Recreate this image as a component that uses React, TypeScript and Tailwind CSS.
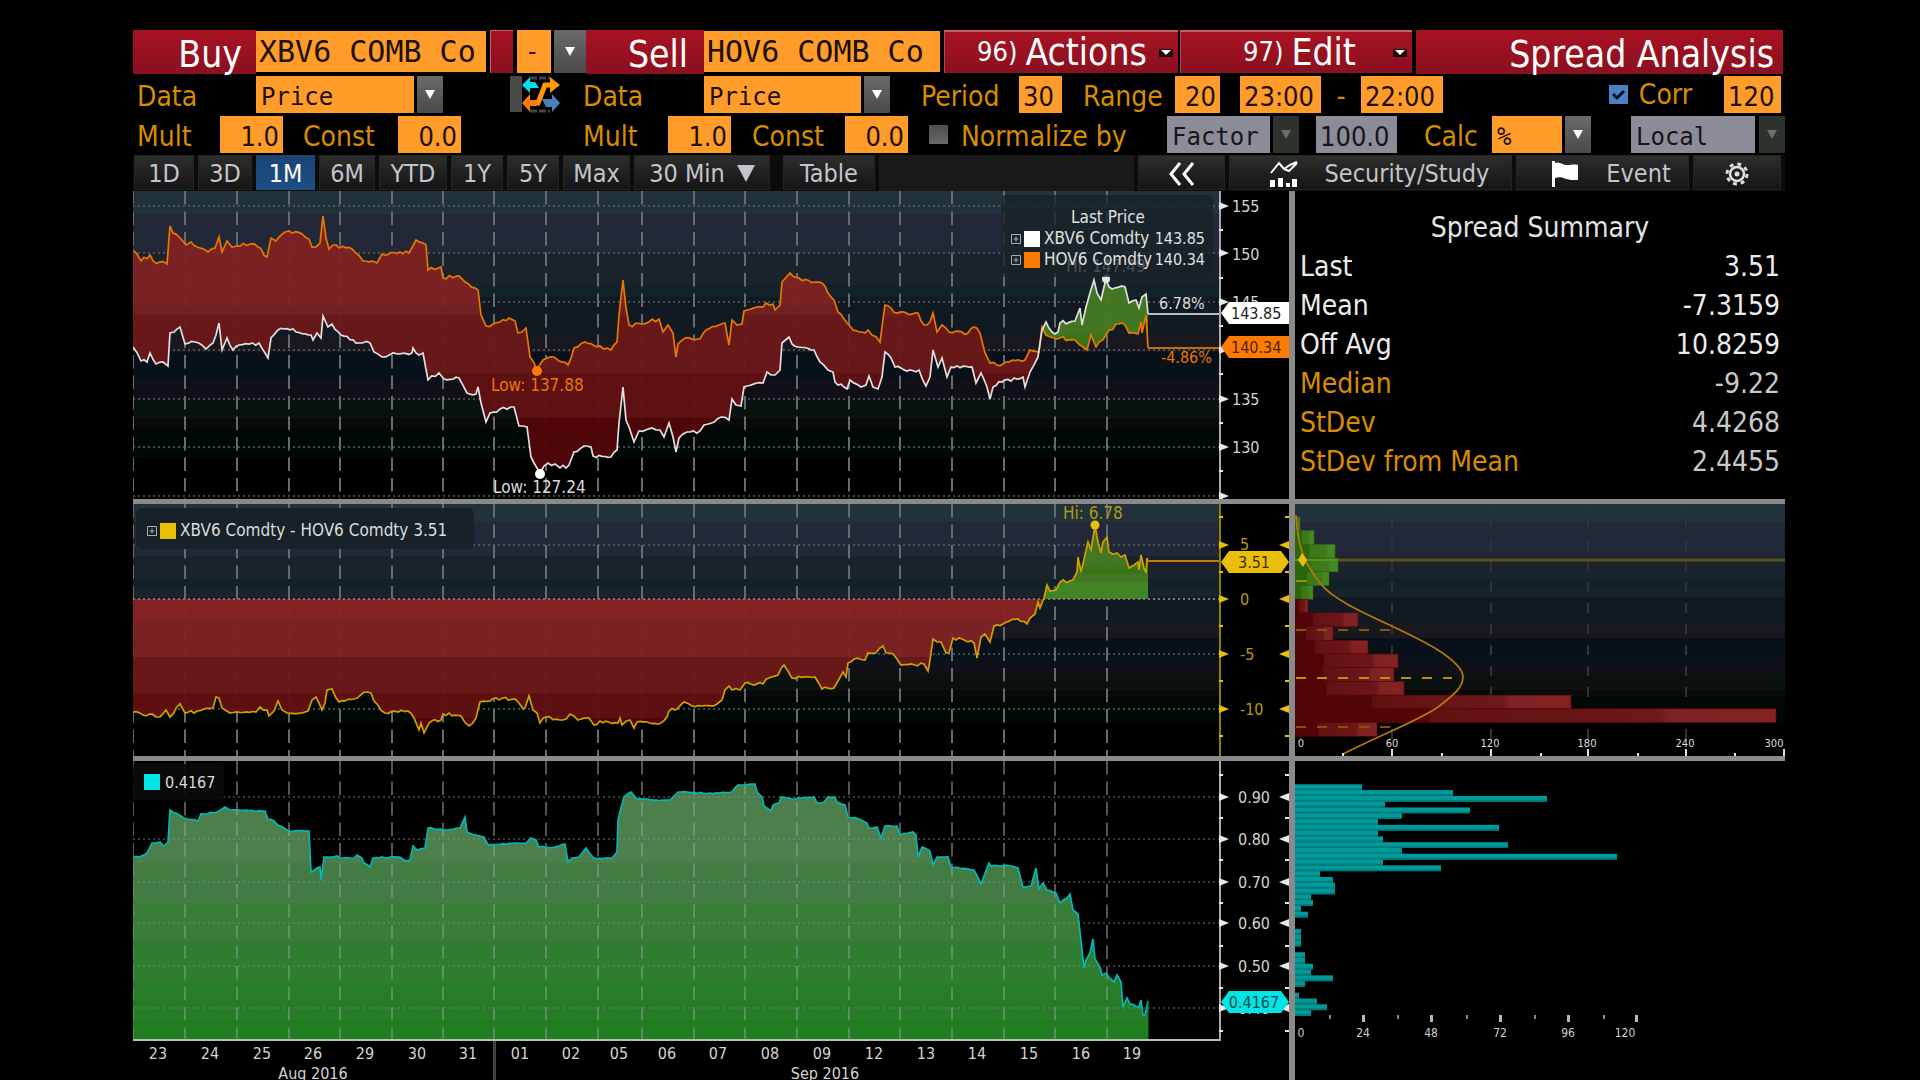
import type { ReactNode } from 'react';
import clsx from 'clsx';

type Point = [number, number];
type Band = [number, string];

const HO_PATH =
  '133,250 141,261 150,255 153,261 167,264 170,226 173,233 182,240 186,245 191,242 208,252 215,248 219,237 222,252 227,241 232,247 237,246 250,244 258,247 267,257 271,238 276,241 285,232 289,231 302,234 309,239 312,247 320,243 323,216 326,238 329,249 333,245 352,249 363,261 372,261 377,263 382,254 409,253 413,246 416,240 426,245 428,270 441,267 443,278 459,276 465,282 478,290 481,315 486,326 500,322 509,318 515,321 518,333 526,328 530,357 537,370 543,360 554,357 559,361 568,365 574,348 585,342 600,346 611,350 617,342 619,315 623,280 626,308 629,325 642,324 659,319 663,332 668,325 673,333 676,357 678,344 685,338 700,339 706,330 719,325 725,323 729,345 732,320 737,325 742,324 744,311 763,307 766,303 773,304 775,310 780,305 782,282 790,273 799,278 815,282 822,283 828,293 834,300 838,312 847,323 853,330 865,333 868,330 872,335 880,342 882,327 885,305 891,308 897,313 918,313 924,325 930,322 933,313 937,332 942,325 949,332 968,333 974,327 980,333 985,353 990,363 997,365 1006,362 1025,360 1030,350 1039,352 1042,327 1046,335 1060,338 1075,340 1083,347 1087,350 1091,335 1096,347 1106,335 1116,324 1125,325 1129,333 1138,334 1141,322 1142,333 1146,315 1148,348';

const XB_PATH =
  '133,347 141,361 147,362 150,353 156,364 163,362 168,366 170,333 174,332 180,327 185,344 195,342 206,349 213,343 219,323 222,350 227,338 233,350 239,345 259,343 268,358 271,338 278,330 293,329 311,335 313,340 317,333 321,338 323,316 328,327 332,324 341,335 359,343 370,343 374,352 382,357 393,353 412,353 413,348 419,355 423,353 428,380 439,373 444,379 459,378 467,393 476,394 478,387 481,403 486,422 490,413 500,409 514,407 519,426 527,427 531,457 540,473 548,463 555,464 560,468 569,465 574,452 587,446 591,447 593,456 611,457 617,450 619,423 623,387 626,420 629,427 634,442 639,431 652,428 660,430 664,437 669,423 673,437 676,452 679,438 687,432 700,431 704,425 721,417 729,420 732,399 736,405 741,406 744,387 763,383 767,372 775,375 780,370 782,343 789,337 792,344 798,347 814,350 820,362 828,370 833,372 835,382 847,389 850,380 861,387 866,385 869,376 873,387 878,389 882,377 885,352 891,358 895,367 907,371 919,370 926,386 930,377 933,350 938,367 942,358 947,377 951,367 972,367 976,383 981,373 987,387 990,399 993,387 1002,382 1023,377 1025,387 1030,372 1038,357 1042,330 1046,322 1052,332 1058,332 1060,323 1075,321 1080,308 1082,325 1086,307 1090,293 1094,280 1097,293 1101,300 1104,287 1106,279 1109,287 1125,287 1129,303 1136,300 1139,308 1142,297 1146,294 1148,314';

const SPREAD_PATH =
  '133,712 143,715 152,714 160,717 166,710 170,717 180,704 185,713 197,711 213,708 216,697 219,698 222,708 230,713 256,712 260,707 267,710 269,716 274,711 278,701 282,710 287,713 308,711 312,700 316,697 319,703 322,710 325,703 327,690 332,689 339,702 354,699 367,692 371,693 374,701 385,713 408,711 414,718 419,730 421,723 424,733 429,723 441,720 443,714 461,716 469,726 476,718 480,702 496,698 515,699 523,709 525,708 529,696 533,710 537,713 540,723 546,717 563,720 570,714 578,720 589,718 594,725 600,721 618,723 620,718 622,725 630,720 634,728 637,722 661,723 667,717 669,711 678,708 684,702 692,706 717,704 722,700 725,690 729,686 732,690 740,690 745,683 763,684 769,678 778,675 784,665 792,678 815,677 822,689 834,688 838,681 843,672 846,677 848,663 854,659 865,660 868,653 876,653 883,646 886,653 893,654 897,659 901,665 924,664 928,671 930,660 933,639 937,642 941,642 946,653 949,653 953,638 962,639 974,643 977,658 981,637 985,634 990,642 994,626 1006,622 1018,619 1027,624 1030,618 1035,614 1038,602 1040,608 1044,598 1047,585 1050,591 1056,590 1060,582 1073,580 1077,572 1078,557 1081,572 1085,555 1088,542 1091,550 1095,526 1098,542 1101,553 1103,542 1107,537 1109,552 1117,553 1121,557 1125,555 1129,568 1134,565 1138,562 1139,570 1141,555 1144,568 1146,573 1147,558 1148,561';

const CORR_PATH =
  '133,857 139,857 147,853 152,843 160,842 164,846 168,842 170,810 184,818 198,821 201,814 217,812 225,807 230,810 265,811 268,819 274,821 278,825 289,831 309,831 311,872 320,867 321,880 324,857 337,856 341,858 354,858 357,855 362,858 364,863 370,867 373,858 400,857 406,861 410,860 413,846 417,850 425,848 428,828 444,830 460,828 465,817 467,832 476,835 484,837 488,845 518,843 526,843 531,838 536,840 539,847 555,847 565,844 568,862 572,858 579,857 586,848 594,858 612,858 617,852 618,820 624,797 631,792 637,799 663,800 670,800 678,792 710,793 732,792 738,785 755,784 757,792 762,797 764,806 771,811 773,805 779,803 781,797 792,799 814,797 817,803 824,802 828,797 835,797 837,802 845,805 848,817 859,819 867,823 869,828 877,827 881,838 885,826 897,826 900,835 908,833 913,832 916,835 918,857 922,847 930,851 933,865 937,857 948,857 951,867 974,870 981,884 989,863 991,866 1006,865 1018,868 1023,887 1031,886 1036,868 1039,889 1043,883 1047,890 1056,893 1060,903 1067,898 1070,894 1073,910 1078,914 1084,968 1086,960 1090,953 1093,939 1095,959 1100,967 1102,975 1106,973 1109,977 1114,982 1117,975 1121,982 1123,1007 1127,998 1130,1004 1139,1007 1141,1000 1143,1015 1145,1015 1148,1001';

const DAY_LINES = [133, 185, 237, 289, 340, 392, 443, 494, 546, 598, 642, 694, 745, 797, 849, 900, 952, 1004, 1055, 1107];
const DAYS: [string, number][] = [
  ['23', 158], ['24', 210], ['25', 262], ['26', 313], ['29', 365], ['30', 417], ['31', 468],
  ['01', 520], ['02', 571], ['05', 619], ['06', 667], ['07', 718], ['08', 770], ['09', 822],
  ['12', 874], ['13', 926], ['14', 977], ['15', 1029], ['16', 1081], ['19', 1132],
];

const PRICE_BANDS: Band[] = [
  [191, '#22323a'], [214, '#232838'], [253, '#1a222b'], [285, '#122229'], [297, '#111923'], [336, '#19181f'],
  [352, '#08101a'], [380, '#111018'], [399, '#0a1210'], [418, '#0a0a0a'], [428, '#000806'], [458, '#000000'],
];
const SPREAD_BANDS: Band[] = [
  [504, '#22323a'], [522, '#232838'], [556, '#1a222b'], [579, '#122229'], [590, '#1a222b'], [597, '#111923'], [623, '#19181f'],
  [638, '#08101a'], [662, '#111018'], [675, '#0a1210'], [690, '#0a0a0a'], [697, '#000806'], [723, '#000000'],
];

const SPREAD_HIST = [5, 19, 40, 43, 34, 18, 13, 63, 38, 73, 103, 99, 109, 276, 481, 82];
const CORR_HIST = [
  67, 158, 252, 90, 175, 107, 83, 204, 83, 88, 213, 107, 322, 88, 146, 25, 38, 40, 40, 16,
  18, 6, 13, 0, 0, 6, 6, 6, 0, 10, 10, 18, 16, 38, 10, 0, 4, 22, 32, 16,
];

const SUMMARY = [
  { label: 'Last', value: '3.51', main: true },
  { label: 'Mean', value: '-7.3159', main: true },
  { label: 'Off Avg', value: '10.8259', main: true },
  { label: 'Median', value: '-9.22' },
  { label: 'StDev', value: '4.4268' },
  { label: 'StDev from Mean', value: '2.4455' },
];

const parse = (path: string) => path.split(' ').map((p) => p.split(',').map(Number) as Point);

// fills the gaps between sampled points with small ticks
function roughen(points: Point[], amp: number): Point[] {
  const out: Point[] = [];
  points.forEach(([x, y], i) => {
    out.push([x, y]);
    const next = points[i + 1];
    if (!next) return;
    const steps = Math.floor((next[0] - x) / 3);
    for (let s = 1; s < steps; s++) {
      const t = s / steps;
      const n = Math.sin((x + s * 3) * 12.9898) * 43758.5453;
      out.push([x + (next[0] - x) * t, y + (next[1] - y) * t + (n - Math.floor(n) - 0.5) * 2 * amp]);
    }
  });
  return out;
}

const toStr = (points: Point[]) => points.map((p) => `${p[0]},${p[1].toFixed(1)}`).join(' ');

const ho = roughen(parse(HO_PATH), 2);
const xb = roughen(parse(XB_PATH), 2);
const spread = roughen(parse(SPREAD_PATH), 1.8);
const corr = roughen(parse(CORR_PATH), 0.8);
const between = toStr([...ho, ...[...xb].reverse()]);

function BandGradient({ id, bands, end }: { id: string; bands: Band[]; end: number }) {
  const start = bands[0][0];
  return (
    <linearGradient id={id} gradientUnits="userSpaceOnUse" x1="0" x2="0" y1={start} y2={end}>
      {bands.map(([y, color], i) => {
        const to = bands[i + 1] ? bands[i + 1][0] : end;
        return [
          <stop key={`${y}a`} offset={(y - start) / (end - start)} stopColor={color} />,
          <stop key={`${y}b`} offset={(to - start) / (end - start)} stopColor={color} />,
        ];
      })}
    </linearGradient>
  );
}

function Grid({ rows, top, bottom, opacity = 1 }: { rows: number[]; top: number; bottom: number; opacity?: number }) {
  return (
    <g opacity={opacity} fill="none">
      {rows.map((y) => (
        <line key={y} x1="133" x2="1219" y1={y} y2={y} stroke="#5a6264" strokeWidth="1.5" strokeDasharray="2 3" />
      ))}
      {DAY_LINES.map((x) => (
        <line key={x} x1={x} x2={x} y1={top} y2={bottom} stroke="#666c6e" strokeWidth="2" strokeDasharray="13.5 7" />
      ))}
    </g>
  );
}

function Ticks({ rows, minor, color, both }: { rows: number[]; minor: number[]; color: string; both?: boolean }) {
  return (
    <g fill={color} stroke="none">
      {rows.map((y) => (
        <g key={y}>
          <path d={`M1219 ${y - 4} L1229 ${y} L1219 ${y + 4} Z`} />
          {both && <path d={`M1289 ${y - 4} L1279 ${y} L1289 ${y + 4} Z`} />}
        </g>
      ))}
      {minor.map((y) => (
        <g key={y}>
          <rect x="1219" y={y - 1} width="4" height="2" />
          {both && <rect x="1285" y={y - 1} width="4" height="2" />}
        </g>
      ))}
    </g>
  );
}

function PriceChart() {
  return (
    <svg viewBox="133 191 1156 308" className="block h-auto w-full text-[16px]">
      <defs>
        <BandGradient id="priceBg" bands={PRICE_BANDS} end={499} />
        <BandGradient
          id="priceRed"
          bands={[[191, '#7e2123'], [305, '#752021'], [315, '#6b1819'], [373, '#611012'], [418, '#520608']]}
          end={499}
        />
        <BandGradient id="priceGreen" bands={[[270, '#447a22'], [335, '#3a7714']]} end={360} />
        <clipPath id="before"><rect x="133" y="191" width="910" height="308" /></clipPath>
        <clipPath id="after"><rect x="1043" y="191" width="106" height="308" /></clipPath>
      </defs>
      <rect x="133" y="191" width="1087" height="308" fill="url(#priceBg)" />
      <Grid rows={[206, 253, 302, 350, 399, 447, 496]} top={191} bottom={499} />
      <polygon points={between} fill="url(#priceRed)" fillOpacity="0.96" clipPath="url(#before)" />
      <polygon points={between} fill="url(#priceGreen)" fillOpacity="0.96" clipPath="url(#after)" />
      <polyline points={toStr(ho)} fill="none" stroke="#e87800" strokeWidth="1.7" />
      <polyline points={toStr(xb)} fill="none" stroke="#e2dede" strokeWidth="1.7" />
      <path d="M1148 348H1219" stroke="#c56a08" strokeWidth="2" />
      <path d="M1148 314H1219" stroke="#b9bcc0" strokeWidth="2" />
      <circle cx="537" cy="371" r="5" fill="#ff7a00" />
      <circle cx="540" cy="474" r="5" fill="#fff" />
      <circle cx="1106" cy="279" r="4" fill="#e8e8e8" />
      <g className="text-[17px]">
        <text x="491" y="391" fill="#e87800">Low: 137.88</text>
        <text x="493" y="493" fill="#dcdcdc">Low: 127.24</text>
        <text x="1106" y="272" fill="#dcdcdc" textAnchor="middle">Hi: 147.49</text>
      </g>
      <text x="1159" y="309" fill="#dcdcdc">6.78%</text>
      <text x="1161" y="363" fill="#e87800">-4.86%</text>
      <rect x="1219" y="191" width="2" height="308" fill="#a9a9a9" />
      <Ticks rows={[206, 253, 302, 350, 399, 447, 496]} minor={[230, 278, 326, 374, 423, 471]} color="#e8e8e8" />
      <g fill="#d4d4d4">
        <text x="1232" y="212">155</text>
        <text x="1232" y="260">150</text>
        <text x="1232" y="308">145</text>
        <text x="1232" y="405">135</text>
        <text x="1232" y="453">130</text>
      </g>
      <path d="M1221 313 L1229 302 H1289 V324 H1229 Z" fill="#fff" />
      <path d="M1221 347 L1229 336 H1289 V358 H1229 Z" fill="#ff7a00" />
      <text x="1231" y="319" fill="#222">143.85</text>
      <text x="1231" y="353" fill="#4a2400">140.34</text>
    </svg>
  );
}

function SpreadChart() {
  const area = toStr([[133, 599], ...spread, [1148, 599]]);
  return (
    <svg viewBox="133 504 1156 252" className="block h-auto w-full text-[16px]">
      <defs>
        <BandGradient id="spreadBg" bands={SPREAD_BANDS} end={756} />
        <BandGradient
          id="spreadRed"
          bands={[[599, '#882223'], [619, '#7e2223'], [657, '#6b1819'], [693, '#611011'], [718, '#520608']]}
          end={756}
        />
        <BandGradient id="spreadGreen" bands={[[504, '#447a22'], [567, '#3a7714'], [574, '#447a22'], [582, '#438824']]} end={599} />
        <clipPath id="above"><rect x="1040" y="504" width="109" height="95" /></clipPath>
        <clipPath id="below"><rect x="133" y="599" width="920" height="157" /></clipPath>
      </defs>
      <rect x="133" y="504" width="1087" height="252" fill="url(#spreadBg)" />
      <Grid rows={[545, 599, 654, 709]} top={504} bottom={756} />
      <polygon points={area} fill="url(#spreadRed)" fillOpacity="0.96" clipPath="url(#below)" />
      <polygon points={area} fill="url(#spreadGreen)" fillOpacity="0.96" clipPath="url(#above)" />
      <path d="M133 599H1219" stroke="#8a8a8a" strokeWidth="1.5" strokeDasharray="2 3" />
      <polyline points={toStr(spread)} fill="none" stroke="#cfa000" strokeWidth="1.7" />
      <path d="M1148 561H1219" stroke="#c87a10" strokeWidth="2" />
      <circle cx="1095" cy="525" r="4.5" fill="#eabf08" />
      <text x="1063" y="519" fill="#b09a14" className="text-[17px]">Hi: 6.78</text>
      <rect x="1219" y="504" width="2" height="252" fill="#8a8000" />
      <Ticks rows={[545, 599, 654, 709]} minor={[517, 572, 626, 681, 736]} color="#eabf08" both />
      <g fill="#b89a10">
        <text x="1240" y="550">5</text>
        <text x="1240" y="605">0</text>
        <text x="1240" y="660">-5</text>
        <text x="1240" y="715">-10</text>
      </g>
      <path d="M1221 562 L1229 551 H1281 L1289 562 L1281 573 H1229 Z" fill="#eabf08" />
      <text x="1254" y="568" fill="#3a3000" textAnchor="middle">3.51</text>
    </svg>
  );
}

function CorrelationChart() {
  const rows = [797, 839, 882, 923, 966, 1008];
  return (
    <svg viewBox="133 761 1156 319" className="block h-auto w-full text-[16px]">
      <defs>
        <BandGradient
          id="corrFill"
          bands={[[784, '#4c7f4c'], [863, '#427c42'], [903, '#397d39'], [942, '#2f7d2f'], [983, '#277c27'], [1020, '#207d20']]}
          end={1040}
        />
        <clipPath id="corrArea"><polygon points={toStr([[133, 1040], ...corr, [1148, 1040]])} /></clipPath>
      </defs>
      <g opacity="0.8">
        <Grid rows={rows} top={761} bottom={1040} />
      </g>
      <g clipPath="url(#corrArea)">
        <rect x="133" y="761" width="1016" height="279" fill="url(#corrFill)" />
        <g className="brightness-175">
          <Grid rows={rows} top={761} bottom={1040} opacity={0.35} />
        </g>
      </g>
      <polyline points={toStr(corr)} fill="none" stroke="#00b8b8" strokeWidth="1.7" />
      <path d="M1148 1001V1040" stroke="#207d20" />
      <rect x="133" y="1039" width="1087" height="2" fill="#b4c4b4" />
      <rect x="1219" y="761" width="2" height="280" fill="#a9a9a9" />
      <rect x="493" y="1041" width="3" height="39" fill="#3c443c" />
      <Ticks rows={rows} minor={[775, 818, 860, 903, 946, 988, 1031]} color="#e8e8e8" both />
      <g fill="#d4d4d4" textAnchor="middle">
        <text x="1254" y="803">0.90</text>
        <text x="1254" y="845">0.80</text>
        <text x="1254" y="888">0.70</text>
        <text x="1254" y="929">0.60</text>
        <text x="1254" y="972">0.50</text>
        <text x="1254" y="1014">0.40</text>
        {DAYS.map(([day, x]) => (
          <text key={day} x={x} y="1059">{day}</text>
        ))}
        <text x="313" y="1079">Aug 2016</text>
        <text x="825" y="1079">Sep 2016</text>
      </g>
      <path d="M1221 1002 L1229 991 H1281 L1289 1002 L1281 1013 H1229 Z" fill="#00e6e6" />
      <text x="1254" y="1008" fill="#004a4a" textAnchor="middle">0.4167</text>
    </svg>
  );
}

function SpreadHistogram() {
  const ticks = [1392, 1491, 1588, 1686, 1784];
  const step = 13.7;
  return (
    <svg viewBox="1295 504 490 252" className="block h-auto w-full text-[11px]">
      <defs>
        <linearGradient id="barRed">
          <stop offset="0" stopColor="#520506" />
          <stop offset="0.28" stopColor="#520506" />
          <stop offset="0.28" stopColor="#611012" />
          <stop offset="0.75" stopColor="#6d181a" />
          <stop offset="0.78" stopColor="#7e2223" />
          <stop offset="1" stopColor="#842223" />
        </linearGradient>
        <linearGradient id="barGreen">
          <stop offset="0" stopColor="#286808" />
          <stop offset="0.35" stopColor="#286808" />
          <stop offset="0.35" stopColor="#3a7714" />
          <stop offset="0.8" stopColor="#447a22" />
          <stop offset="0.8" stopColor="#438824" />
        </linearGradient>
      </defs>
      <rect x="1295" y="504" width="490" height="252" fill="url(#spreadBg)" />
      {ticks.slice(0, 4).map((x) => (
        <line key={x} x1={x} x2={x} y1="498" y2="740" stroke="#2e3436" strokeWidth="2" strokeDasharray="10 11" />
      ))}
      <path d="M1295 560H1785" stroke="#5c5424" strokeWidth="3" />
      {SPREAD_HIST.map((w, i) => (
        <rect
          key={i}
          x="1295"
          y={517 + i * step}
          width={w}
          height={step}
          fill={i < 6 ? 'url(#barGreen)' : 'url(#barRed)'}
          stroke={i < 6 ? '#2c6c10' : '#5e0607'}
          strokeWidth="0.6"
        />
      ))}
      <path d="M1295 560H1338" stroke="#5a9018" strokeWidth="2" />
      <path d="M1296 581H1307" stroke="#a88a10" strokeWidth="2" />
      <g stroke="#a86a08" strokeWidth="2" strokeDasharray="10 11">
        <path d="M1296 678H1452" stroke="#c08a10" />
        <path d="M1296 630H1390" stroke="#80580a" />
        <path d="M1296 727H1390" stroke="#984a08" />
      </g>
      <path
        d="M1296 515 C1298 545 1302 560 1320 583 C1338 607 1400 626 1438 650 C1455 661 1463 670 1463 677 C1463 687 1455 694 1438 707 C1420 720 1380 735 1343 754"
        fill="none"
        stroke="#b87808"
        strokeWidth="1.7"
      />
      <path d="M1298 560 L1302 553 L1307 560 L1303 567 Z" fill="#eabf08" />
      <g fill="#e0e0e0">
        {ticks.map((x) => (
          <rect key={x} x={x - 1} y="749" width="2" height="7" />
        ))}
        {[1343, 1442, 1541, 1638, 1735].map((x) => (
          <rect key={x} x={x - 1} y="753" width="2" height="3" />
        ))}
      </g>
      <g fill="#dcdcdc" textAnchor="middle">
        <text x="1301" y="747">0</text>
        <text x="1392" y="747">60</text>
        <text x="1490" y="747">120</text>
        <text x="1587" y="747">180</text>
        <text x="1685" y="747">240</text>
        <text x="1774" y="747">300</text>
      </g>
    </svg>
  );
}

function CorrelationHistogram() {
  const step = 5.79;
  return (
    <svg viewBox="1295 761 490 319" className="block h-auto w-full text-[12px]">
      {CORR_HIST.map((w, i) => (
        <g key={i}>
          <rect x="1295" y={784.3 + i * step} width={w} height={step} fill="#009a9a" />
          <rect x="1295" y={784.3 + i * step + 4} width={w} height="1.8" fill="#007c7c" />
        </g>
      ))}
      <g fill="#b8b8b8">
        {[1363, 1431, 1500, 1568, 1636].map((x) => (
          <rect key={x} x={x - 1} y="1015" width="3" height="7" />
        ))}
        {[1330, 1398, 1467, 1535, 1604].map((x) => (
          <rect key={x} x={x - 1} y="1015" width="2" height="4" fill="#888" />
        ))}
      </g>
      <g fill="#cfcfcf" textAnchor="middle">
        <text x="1301" y="1037">0</text>
        <text x="1363" y="1037">24</text>
        <text x="1431" y="1037">48</text>
        <text x="1500" y="1037">72</text>
        <text x="1568" y="1037">96</text>
        <text x="1625" y="1037">120</text>
      </g>
    </svg>
  );
}

function Expand() {
  return (
    <svg viewBox="0 0 10 10" className="size-[10px] shrink-0" fill="none" stroke="#a8aeb0">
      <path d="M.5 .5H9.5V9.5H.5ZM2.5 5H7.5M5 2.5V7.5" />
    </svg>
  );
}

const amber = 'bg-[#ff9c2a] text-[#1c1000]';
const grey = 'bg-[#8c8c98] text-[#15151a]';
const mono = "font-['DejaVu_Sans_Mono',monospace]";

function Field({ label, value, className }: { label: string; value: string; className?: string }) {
  return (
    <input
      aria-label={label}
      defaultValue={value}
      className={clsx('h-[37px] shrink-0 px-1 pt-[3px] text-[27px] leading-[34px] outline-none', className ?? '')}
    />
  );
}

interface PickerProps {
  label: string;
  value: string;
  className: string;
  arrow?: string;
  disabled?: boolean;
}

function Picker({ label, value, className, arrow, disabled }: PickerProps) {
  return (
    <div className="flex shrink-0 gap-[3px]">
      <select
        aria-label={label}
        defaultValue={value}
        className={clsx('appearance-none rounded-none px-[5px] text-[24px] outline-none', mono, disabled ? grey : amber, className)}
      >
        <option>{value}</option>
      </select>
      <span
        className={clsx(
          'flex items-center justify-center',
          disabled ? 'bg-[#2c322c] text-[#6c706c]' : 'bg-linear-to-b from-[#6a6a6a] to-[#4a4a4a] text-white',
          arrow ?? 'w-[26px]',
        )}
      >
        <svg viewBox="0 0 10 9" className="h-[9px] w-[10px]" fill="currentColor">
          <path d="M0 0H10L5 9Z" />
        </svg>
      </span>
    </div>
  );
}

function MenuButton({ code, name, className }: { code: string; name: string; className: string }) {
  return (
    <button
      className={clsx(
        'flex h-[43px] shrink-0 items-center border-t-2 border-l border-t-[#c8606a] border-l-[#b04a54] bg-linear-to-b from-[#a81222] to-[#8a1020] whitespace-nowrap',
        className,
      )}
    >
      <span className="text-[27px]">{code}</span>
      <span className="ml-2 flex-1 text-left text-[37px] leading-[40px]">{name}</span>
      <svg viewBox="0 0 14 8" className="mr-[5px] h-2 w-[14px]">
        <rect width="14" height="8" fill="#1a0a0c" />
        <path d="M2 1H12L7 6Z" fill="#fff" />
      </svg>
    </button>
  );
}

function Tool({ className, active, children }: { className: string; active?: boolean; children: ReactNode }) {
  return (
    <button
      className={clsx(
        'flex h-[35px] shrink-0 items-center justify-center pt-[2px] text-[25px] whitespace-nowrap',
        active
          ? 'bg-linear-to-b from-[#1c4474] to-[#1c4e84] text-white'
          : 'border border-[#242424] bg-linear-to-b from-[#2c2e2c] to-[#151515] text-[#c4c4cc]',
        className,
      )}
    >
      {children}
    </button>
  );
}

const redBar = 'bg-linear-to-b from-[#a81222] to-[#8a1020]';

export default function App() {
  return (
    <main className="min-h-screen overflow-hidden bg-black pt-[30px] pr-[135px] pl-[133px] font-['DejaVu_Sans_Condensed','Noto_Sans',sans-serif] text-white">
      <div className="flex h-11 items-start">
        <label htmlFor="buy" className={clsx('h-11 w-[123px] shrink-0 pr-[14px] text-right text-[37px] leading-[50px]', redBar)}>Buy</label>
        <input id="buy" defaultValue="XBV6 COMB Co" className={clsx('mt-px h-[41px] w-[230px] shrink-0 pl-[3px] text-[30px] outline-none', mono, amber)} />
        <button aria-label="Swap legs" className={clsx('ml-1 h-[43px] w-[23px] shrink-0 border-t border-l border-[#c8606a]', redBar)} />
        <div className="ml-1 flex h-[43px]">
          <Picker label="Operator" value="-" className="w-[34px] pl-[8px]" arrow="w-[32px]" />
        </div>
        <label htmlFor="sell" className={clsx('h-11 w-[118px] shrink-0 pr-4 text-right text-[37px] leading-[50px]', redBar)}>Sell</label>
        <input id="sell" defaultValue="HOV6 COMB Co" className={clsx('mt-px h-[41px] w-[236px] shrink-0 pl-[3px] text-[30px] outline-none', mono, amber)} />
        <MenuButton code="96)" name="Actions" className="ml-1 w-[234px] pl-8" />
        <MenuButton code="97)" name="Edit" className="ml-[2px] w-[232px] pl-[62px]" />
        <h1 className={clsx('mr-[2px] ml-1 h-11 flex-1 pr-[9px] text-right text-[37px] leading-[50px] whitespace-nowrap', redBar)}>Spread Analysis</h1>
      </div>

      <div className="mt-[2px] flex h-[37px] items-stretch text-[28px] leading-[42px] text-[#d88c00]">
        <span className="w-[123px] shrink-0 pl-1">Data</span>
        <Picker label="Buy data" value="Price" className="w-[158px]" />
        <button aria-label="Swap securities" className="ml-[67px] w-[50px] shrink-0">
          <svg viewBox="0 0 50 37" className="h-[37px] w-[50px]">
            <rect width="12" height="36" fill="#4a4a4a" />
            <path d="M20 2H40M20 35H40" stroke="#444" strokeWidth="3" strokeDasharray="7 2" />
            <path d="M23 27H28L35 9H40" fill="none" stroke="#ff9800" strokeWidth="5" />
            <path d="M40 1L50 9L40 17Z" fill="#ff9800" />
            <path d="M12 9L20 1V6H25L29 12H20V17Z" fill="#00e0e8" />
            <path d="M12 27L20 18V36Z" fill="#ff7a00" />
            <path d="M18 27H27" stroke="#ff7a00" strokeWidth="6" />
            <path d="M50 27L42 18V23H32L36 31H42V36Z" fill="#4a80c0" />
          </svg>
        </button>
        <span className="ml-[19px] w-[125px] shrink-0 pl-1">Data</span>
        <Picker label="Sell data" value="Price" className="w-[157px]" />
        <span className="ml-[31px] w-[98px] shrink-0">Period</span>
        <Field label="Period" value="30" className={clsx('w-[43px]', amber)} />
        <span className="ml-[21px] w-[92px] shrink-0">Range</span>
        <Field label="Range" value="20" className={clsx('w-[45px] text-right', amber)} />
        <Field label="Start time" value="23:00" className={clsx('ml-5 w-[81px]', amber)} />
        <span className="w-10 shrink-0 text-center">-</span>
        <Field label="End time" value="22:00" className={clsx('w-[82px]', amber)} />
        <label className="ml-auto flex shrink-0 items-center leading-[36px]">
          <span className="relative mr-[11px] flex size-[19px]">
            <input type="checkbox" defaultChecked className="size-[19px] appearance-none bg-[#4a80c4]" />
            <svg viewBox="0 0 19 19" className="pointer-events-none absolute inset-0 size-[19px]" fill="none" stroke="#0a1420" strokeWidth="3">
              <path d="M4 9L8 13L15 6" />
            </svg>
          </span>
          Corr
        </label>
        <Field label="Correlation window" value="120" className={clsx('mr-1 ml-8 w-[57px]', amber)} />
      </div>

      <div className="mt-[3px] flex h-[37px] items-stretch text-[28px] leading-[42px] text-[#d88c00]">
        <span className="w-[87px] shrink-0 pl-1">Mult</span>
        <Field label="Buy multiplier" value="1.0" className={clsx('w-[63px] text-right', amber)} />
        <span className="ml-5 w-[95px] shrink-0">Const</span>
        <Field label="Buy constant" value="0.0" className={clsx('w-[63px] text-right', amber)} />
        <span className="ml-[122px] w-[85px] shrink-0">Mult</span>
        <Field label="Sell multiplier" value="1.0" className={clsx('w-[63px] text-right', amber)} />
        <span className="ml-[21px] w-[93px] shrink-0">Const</span>
        <Field label="Sell constant" value="0.0" className={clsx('w-[63px] text-right', amber)} />
        <label className="ml-[21px] flex w-[238px] shrink-0">
          <input type="checkbox" className="mt-[9px] mr-[13px] size-[19px] appearance-none bg-linear-to-b from-[#4c504c] to-[#686868]" />
          Normalize by
        </label>
        <Picker label="Normalize by" value="Factor" className="w-[103px] overflow-hidden" disabled />
        <Field label="Factor value" value="100.0" className={clsx('ml-[17px] w-[81px]', grey)} />
        <span className="ml-[27px] w-[68px] shrink-0">Calc</span>
        <Picker label="Calc" value="%" className="w-[70px]" />
        <div className="ml-auto flex">
          <Picker label="Time zone" value="Local" className="mr-px w-[124px]" disabled />
        </div>
      </div>

      <div className="mt-[2px] flex h-9 gap-1 bg-[#0c0c0c] pl-px">
        <Tool className="w-[60px]">1D</Tool>
        <Tool className="w-[54px]">3D</Tool>
        <Tool className="w-[59px]" active>1M</Tool>
        <Tool className="w-[56px]">6M</Tool>
        <Tool className="w-[68px]">YTD</Tool>
        <Tool className="w-[52px]">1Y</Tool>
        <Tool className="w-[52px]">5Y</Tool>
        <Tool className="w-[67px]">Max</Tool>
        <Tool className="w-[136px]">
          30 Min
          <svg viewBox="0 0 18 17" className="ml-3 h-[17px] w-[18px]" fill="#c8c0cc">
            <path d="M0 0H18L9 17Z" />
          </svg>
        </Tool>
        <Tool className="ml-[9px] w-[92px]">Table</Tool>
        <div className="h-9 flex-1 bg-[#191919]" />
        <Tool className="w-[87px]">
          <svg viewBox="0 0 26 24" className="h-6 w-[26px]" fill="none" stroke="#fff" strokeWidth="3">
            <path d="M11 1L2 12L11 23M24 1L15 12L24 23" />
          </svg>
        </Tool>
        <Tool className="w-[283px] pl-[18px]">
          <svg viewBox="0 0 28 26" className="mr-[27px] h-[26px] w-7" fill="#fff">
            <path d="M1 12L9 2L14 8L20 4L27 1M14 8L19 10L27 2" fill="none" stroke="#fff" strokeWidth="2" />
            <path d="M0 19H5V26H0ZM8 17H13V26H8ZM16 22H20V26H16ZM22 18H27V26H22Z" />
          </svg>
          Security/Study
        </Tool>
        <Tool className="w-[173px] pl-[18px]">
          <svg viewBox="0 0 26 26" className="mr-7 h-[26px] w-[26px]" fill="#fff">
            <path d="M0 0H3V2C8 0 10 4 15 4C19 4 22 3 26 4V19C20 19 18 19 14 18C10 16 7 16 3 17V26H0Z" />
          </svg>
          Event
        </Tool>
        <Tool className="mr-1 w-[88px]">
          <svg viewBox="0 0 24 24" className="size-6" fill="none" stroke="#e0e0e0">
            <circle cx="12" cy="12" r="7" strokeWidth="2.5" />
            <circle cx="12" cy="12" r="10" strokeWidth="3" strokeDasharray="3.9 3.954" />
            <circle cx="12" cy="12" r="2.5" fill="#e0e0e0" stroke="none" />
          </svg>
        </Tool>
      </div>

      <div className="grid grid-cols-[minmax(0,1156fr)_minmax(0,496fr)] text-[17px] leading-[21px]">
        <section className="relative border-b-[5px] border-[#8a8a8a]">
          <PriceChart />
          <div className="absolute top-[4px] right-[76px] w-[211px] rounded bg-[#172126]/75 pt-[12px] pr-2 pb-[7px] pl-[9px] text-[#e0e0e0]">
            <p className="text-center">Last Price</p>
            <p className="flex items-center whitespace-nowrap">
              <Expand />
              <span className="mr-1 ml-[3px] size-4 bg-white" />
              <span className="flex-1">XBV6 Comdty</span>
              <span className="text-[16px]">143.85</span>
            </p>
            <p className="flex items-center whitespace-nowrap">
              <Expand />
              <span className="mr-1 ml-[3px] size-4 bg-[#ff7a00]" />
              <span className="flex-1">HOV6 Comdty</span>
              <span className="text-[16px]">140.34</span>
            </p>
          </div>
        </section>

        <section className="border-b-[5px] border-l-[6px] border-[#8a8a8a] pt-4 pr-[5px] pl-[5px] text-[28px]">
          <table className="w-full">
            <caption className="h-[40px] text-center leading-[42px] text-[#e4e4e4]">Spread Summary</caption>
            <tbody>
              {SUMMARY.map((row) => (
                <tr key={row.label} className="h-[39px] leading-[37px]">
                  <th scope="row" className={clsx('p-0 text-left font-normal', row.main ? 'text-[#ececec]' : 'text-[#d88c00]')}>
                    {row.label}
                  </th>
                  <td className={clsx('p-0 text-right', row.main ? 'text-[#ececec]' : 'text-[#c8c8c8]')}>{row.value}</td>
                </tr>
              ))}
            </tbody>
          </table>
        </section>

        <section className="relative border-b-[5px] border-[#8a8a8a]">
          <SpreadChart />
          <p className="absolute top-[4px] left-[3px] flex h-[41px] w-[338px] items-center rounded-md bg-[#172126]/95 pt-1 pl-[11px] whitespace-nowrap text-[#dcdcdc]">
            <Expand />
            <span className="mr-1 ml-[3px] size-4 bg-[#eabf08]" />
            XBV6 Comdty - HOV6 Comdty 3.51
          </p>
        </section>

        <section className="border-b-[5px] border-l-[6px] border-[#8a8a8a]">
          <SpreadHistogram />
        </section>

        <section className="relative">
          <CorrelationChart />
          <p className="absolute top-[3px] left-0 flex h-[36px] w-[91px] items-center rounded bg-[#0a0a0a]/90 pl-[11px] text-[16px] text-[#dcdcdc]">
            <span className="mr-[5px] size-4 bg-[#00e6e6]" />
            0.4167
          </p>
        </section>

        <section className="border-l-[6px] border-[#8a8a8a]">
          <CorrelationHistogram />
        </section>
      </div>
    </main>
  );
}
